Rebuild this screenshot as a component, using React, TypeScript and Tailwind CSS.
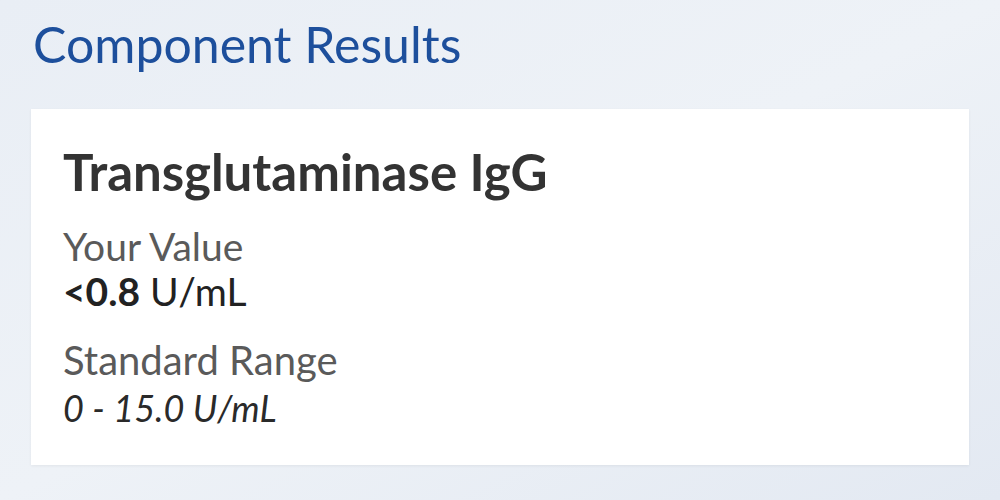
export default function App() {
  return (
    <div className="w-[1000px] h-[500px] overflow-hidden bg-gradient-to-br from-[#e9eef5] via-[#eef2f7] to-[#e3e9f2] font-['Lato',sans-serif]">
      <h1 className="pl-[33px] pt-[14px] h-[109px] text-[50px] leading-[60px] text-[#1d4f9c]">Component Results</h1>
      <div className="mx-[31px] h-[356px] bg-white shadow-[0_1px_3px_rgba(0,0,0,0.06)] px-[32px] pt-[33px]">
        <h2 className="text-[51px] leading-[60px] font-bold text-[#333]">Transglutaminase IgG</h2>
        <div className="mt-[22px] text-[39px] leading-[45px]">
          <p className="text-[#5a5a5a]">Your Value</p>
          <p className="text-[#222]"><span className="font-bold">&lt;0.8</span> U/mL</p>
        </div>
        <div className="mt-[22px] leading-[48px]">
          <p className="text-[#5a5a5a] text-[40px]">Standard Range</p>
          <p className="text-[#2a2a2a] text-[36px] italic">0 - 15.0 U/mL</p>
        </div>
      </div>
    </div>
  );
}
